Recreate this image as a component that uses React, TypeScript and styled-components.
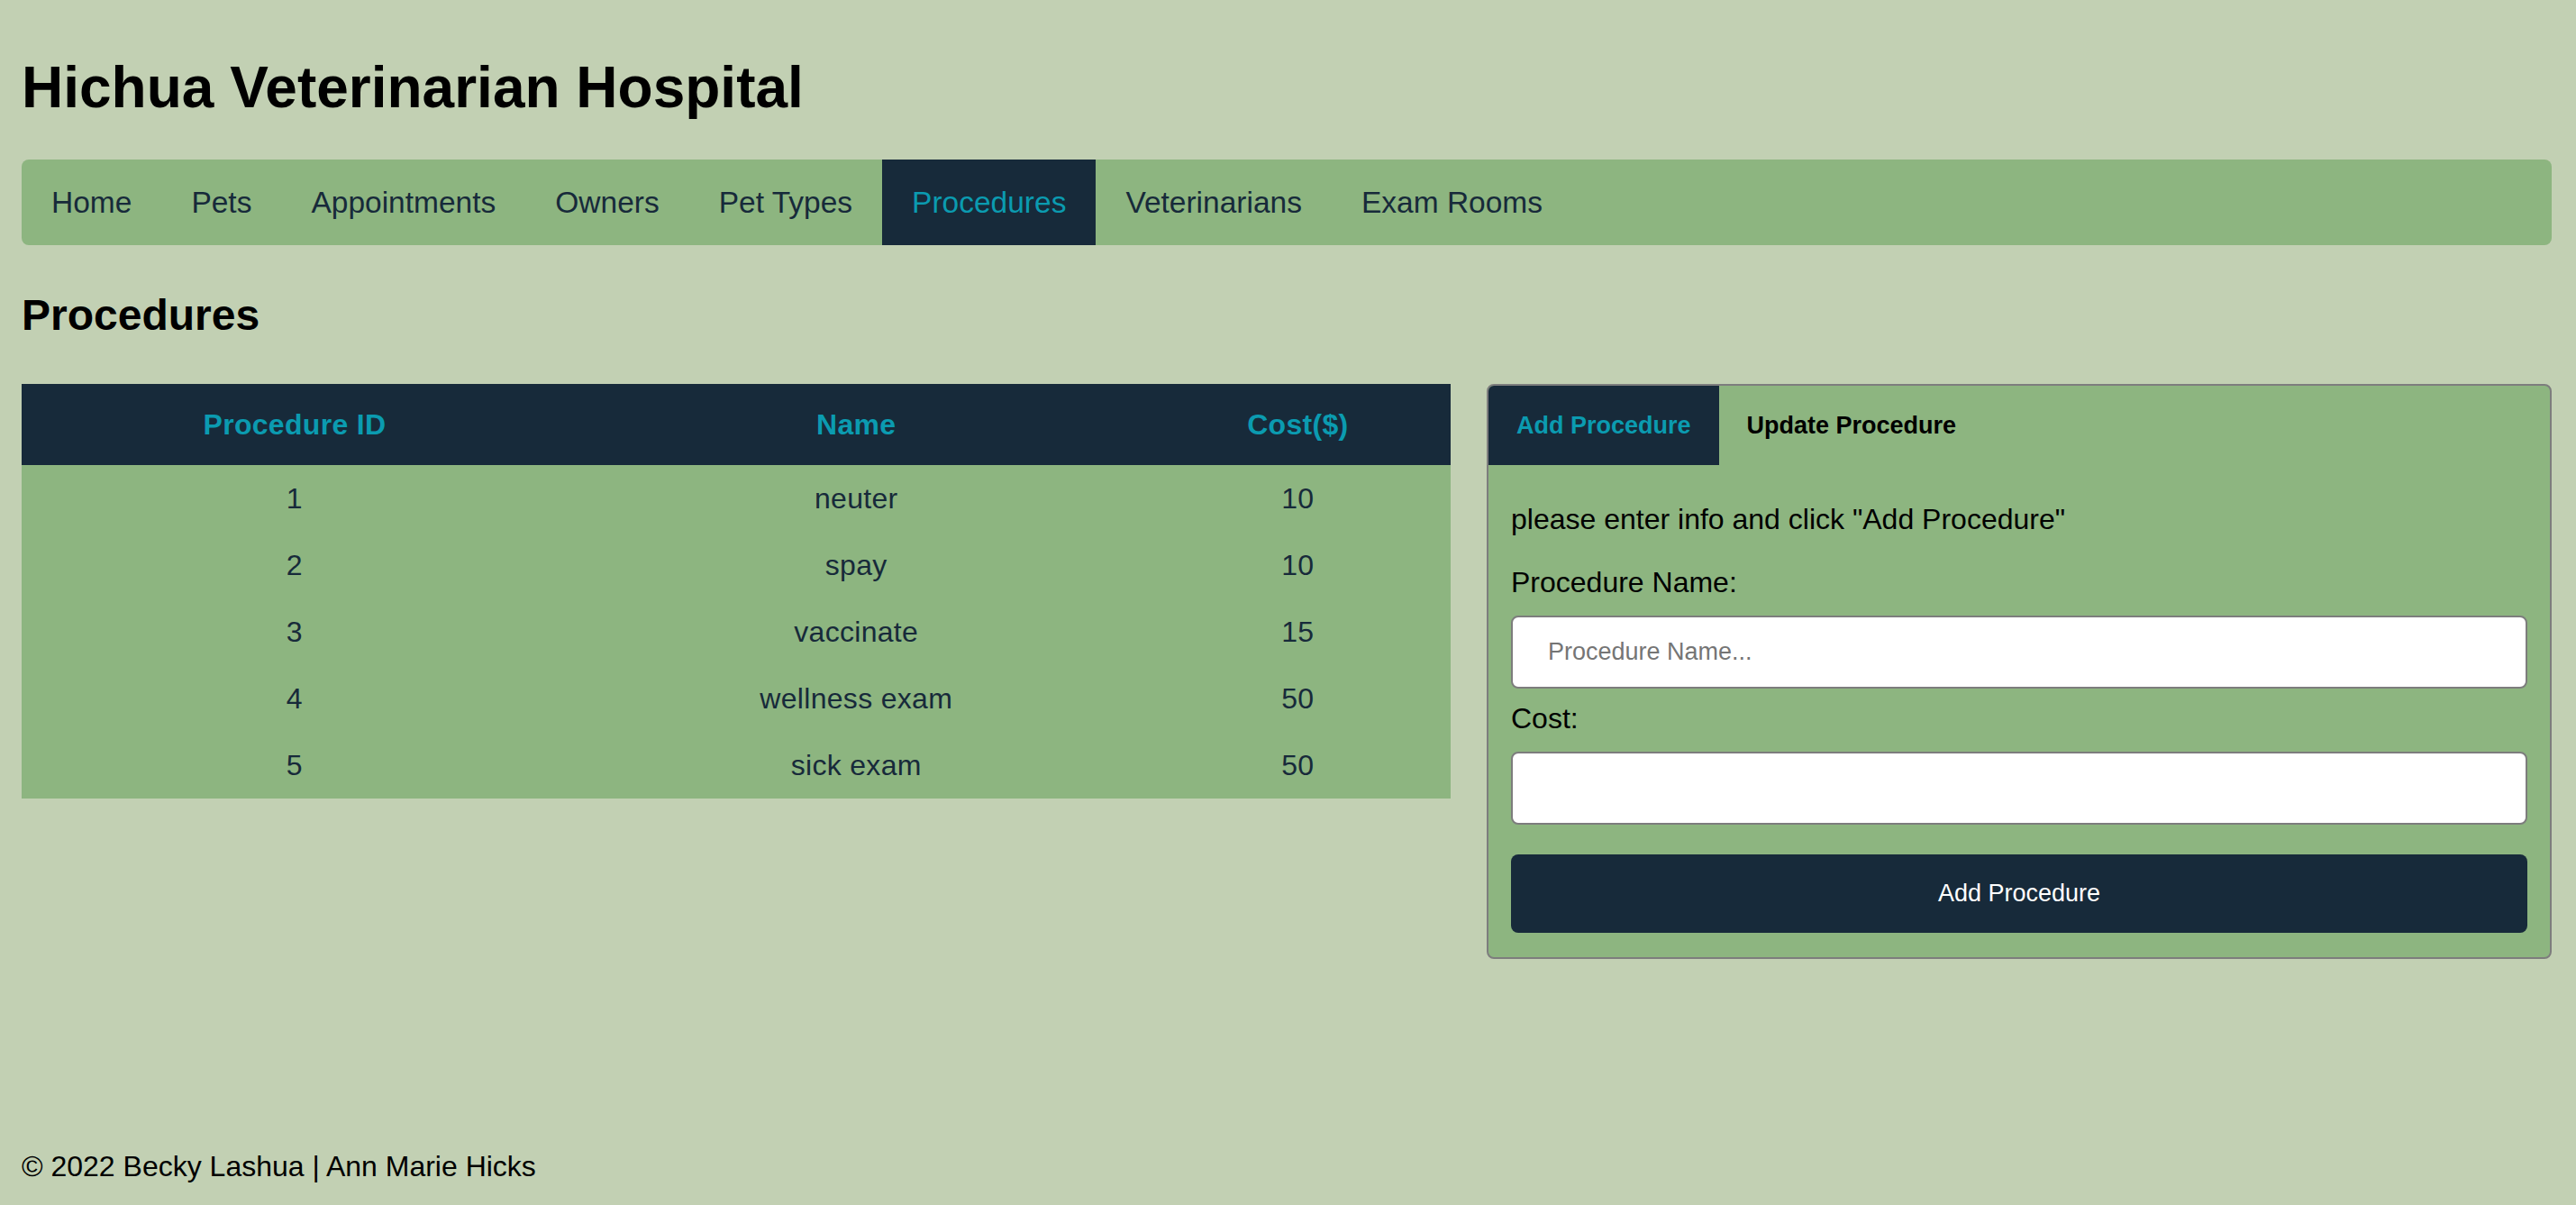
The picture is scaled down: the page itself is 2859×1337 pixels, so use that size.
import styled, { createGlobalStyle } from 'styled-components';

interface IProcedure {
  id: number;
  name: string;
  cost: number;
}

const procedures: IProcedure[] = [
  { id: 1, name: 'neuter', cost: 10 },
  { id: 2, name: 'spay', cost: 10 },
  { id: 3, name: 'vaccinate', cost: 15 },
  { id: 4, name: 'wellness exam', cost: 50 },
  { id: 5, name: 'sick exam', cost: 50 },
];

const navLinks = [
  'Home',
  'Pets',
  'Appointments',
  'Owners',
  'Pet Types',
  'Procedures',
  'Veterinarians',
  'Exam Rooms',
];

export default function App() {
  return (
    <>
      <GlobalStyle />
      <Page>
        <Title>Hichua Veterinarian Hospital</Title>
        <Nav>
          {navLinks.map((link) => (
            <NavLink key={link} $active={link === 'Procedures'}>
              {link}
            </NavLink>
          ))}
        </Nav>

        <Heading>Procedures</Heading>

        <Content>
          <Table>
            <colgroup>
              <col style={{ width: '38.2%' }} />
              <col style={{ width: '40.4%' }} />
              <col style={{ width: '21.4%' }} />
            </colgroup>
            <thead>
              <tr>
                <Th>Procedure ID</Th>
                <Th>Name</Th>
                <Th>Cost($)</Th>
              </tr>
            </thead>
            <tbody>
              {procedures.map((p) => (
                <tr key={p.id}>
                  <Td>{p.id}</Td>
                  <Td>{p.name}</Td>
                  <Td>{p.cost}</Td>
                </tr>
              ))}
            </tbody>
          </Table>

          <Panel>
            <Tabs>
              <Tab $active>Add Procedure</Tab>
              <Tab>Update Procedure</Tab>
            </Tabs>
            <Form>
              <Intro>please enter info and click "Add Procedure"</Intro>
              <Label>Procedure Name:</Label>
              <Input placeholder="Procedure Name..." />
              <Label $spaced>Cost:</Label>
              <Input />
              <SubmitButton type="button">Add Procedure</SubmitButton>
            </Form>
          </Panel>
        </Content>

        <Footer>© 2022 Becky Lashua | Ann Marie Hicks</Footer>
      </Page>
    </>
  );
}

const GlobalStyle = createGlobalStyle`
  * {
    box-sizing: border-box;
  }
  html, body {
    margin: 0;
    padding: 0;
  }
  body {
    background-color: #c2d0b3;
    font-family: 'Liberation Sans', Arial, Helvetica, sans-serif;
    font-size: 32px;
    color: #000;
  }
`;

const Page = styled.div`
  min-height: 100vh;
  display: flex;
  flex-direction: column;
  padding: 0 27px 24px 24px;
`;

const Title = styled.h1`
  font-size: 64px;
  font-weight: bold;
  margin: 60px 0 43px;
`;

const Nav = styled.nav`
  display: flex;
  align-items: stretch;
  height: 95px;
  background-color: #8db580;
  border-radius: 8px;
  overflow: hidden;
`;

const NavLink = styled.a<{ $active?: boolean }>`
  display: flex;
  align-items: center;
  padding: 0 33px;
  font-size: 33.5px;
  color: ${(props) => (props.$active ? '#0b9bb0' : '#172a3a')};
  background-color: ${(props) => (props.$active ? '#172a3a' : 'transparent')};
  text-decoration: none;
  cursor: pointer;
`;

const Heading = styled.h2`
  font-size: 48px;
  font-weight: bold;
  margin: 50px 0 49px;
`;

const Content = styled.div`
  display: grid;
  grid-template-columns: 1586fr 1182fr;
  gap: 40px;
  align-items: start;
`;

const Table = styled.table`
  width: 100%;
  border-collapse: collapse;
  table-layout: fixed;
  background-color: #8db580;
  color: #172a3a;
`;

const Th = styled.th`
  height: 90px;
  padding: 0;
  background-color: #172a3a;
  color: #0b9bb0;
  font-size: 32px;
  font-weight: bold;
  letter-spacing: 0.3px;
  text-align: center;
`;

const Td = styled.td`
  height: 74px;
  padding: 0;
  font-size: 32px;
  letter-spacing: 0.3px;
  text-align: center;
`;

const Panel = styled.div`
  background-color: #8db580;
  border: 2px solid #7d7d7d;
  border-radius: 8px;
  overflow: hidden;
`;

const Tabs = styled.div`
  display: flex;
  height: 88px;
`;

const Tab = styled.button<{ $active?: boolean }>`
  display: flex;
  align-items: center;
  padding: 0 31px;
  border: none;
  font-family: inherit;
  font-size: 27px;
  font-weight: bold;
  color: ${(props) => (props.$active ? '#0b9bb0' : '#000')};
  background-color: ${(props) => (props.$active ? '#172a3a' : 'transparent')};
  cursor: pointer;
`;

const Form = styled.div`
  display: flex;
  flex-direction: column;
  padding: 42px 25px 27px 25px;
`;

const Intro = styled.p`
  margin: 0 0 33px;
`;

const Label = styled.label<{ $spaced?: boolean }>`
  display: block;
  margin-top: ${(props) => (props.$spaced ? '15px' : '0')};
  margin-bottom: 18px;
`;

const Input = styled.input`
  height: 81px;
  width: 100%;
  padding: 0 39px;
  border: 2px solid #7d7d7d;
  border-radius: 8px;
  background-color: #fff;
  font-family: inherit;
  font-size: 27px;
  color: #000;

  &::placeholder {
    color: #757575;
  }
`;

const SubmitButton = styled.button`
  margin-top: 33px;
  height: 87px;
  width: 100%;
  border: none;
  border-radius: 8px;
  background-color: #172a3a;
  color: #fff;
  font-family: inherit;
  font-size: 27px;
  cursor: pointer;
`;

const Footer = styled.footer`
  margin-top: auto;
  font-size: 32px;
`;
